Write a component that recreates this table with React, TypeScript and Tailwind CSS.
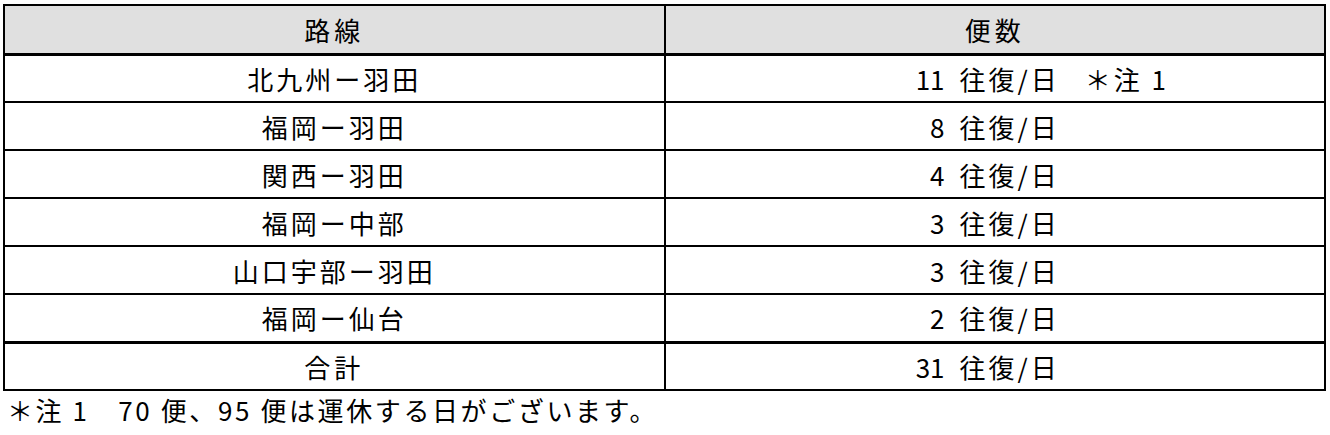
const rows = [
  { route: '北九州ー羽田', count: '11', note: true },
  { route: '福岡ー羽田', count: '8' },
  { route: '関西ー羽田', count: '4' },
  { route: '福岡ー中部', count: '3' },
  { route: '山口宇部ー羽田', count: '3' },
  { route: '福岡ー仙台', count: '2' },
];

const font = {
  fontFamily: '"Noto Sans CJK JP", "Liberation Sans", sans-serif',
};

function Count({ count, note }: { count: string; note?: boolean }) {
  return (
    <div className="flex items-center">
      <span className="w-[279px] text-right">{count}</span>
      <span className="ml-[15px] tracking-[3px]">往復/日</span>
      {note && <span className="ml-[25px] tracking-[3px]">＊注 1</span>}
    </div>
  );
}

export default function App() {
  return (
    <div className="bg-white w-[1330px] h-[435px] pt-[4px] pl-[3px] text-black" style={font}>
      <table className="w-[1323px] border-collapse border-2 border-black table-fixed text-[26px]">
        <thead>
          <tr className="h-[49px] bg-[#e0e0e0] border-b-[3px] border-black">
            <th className="w-1/2 font-normal tracking-[4px] border-r-2 border-black">路線</th>
            <th className="w-1/2 font-normal tracking-[4px]">便数</th>
          </tr>
        </thead>
        <tbody>
          {rows.map((r, i) => (
            <tr
              key={r.route}
              className={
                i === rows.length - 1
                  ? 'h-[48px] border-b-[3px] border-black'
                  : 'h-[48px] border-b-2 border-black'
              }
            >
              <td className="text-center tracking-[3px] border-r-2 border-black">{r.route}</td>
              <td>
                <Count count={r.count} note={r.note} />
              </td>
            </tr>
          ))}
          <tr className="h-[48px]">
            <td className="text-center tracking-[4px] border-r-2 border-black">合計</td>
            <td>
              <Count count="31" />
            </td>
          </tr>
        </tbody>
      </table>
      <p className="text-[26px] leading-[36px] mt-[1px] pl-[4px] tracking-[2.6px]">
        ＊注 1　70 便、95 便は運休する日がございます。
      </p>
    </div>
  );
}
